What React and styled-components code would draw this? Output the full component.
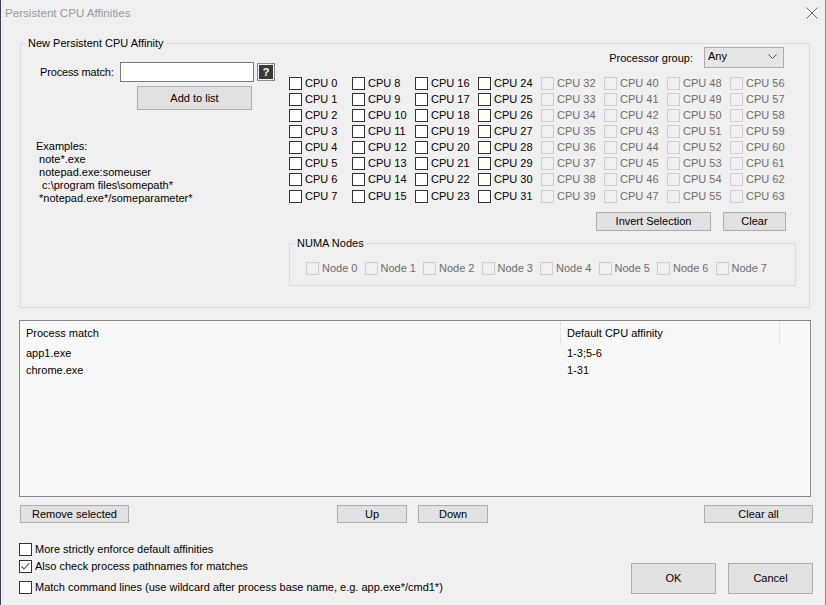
import React from "react";
import styled, { createGlobalStyle } from "styled-components";

const Global = createGlobalStyle`
  html, body {
    margin: 0;
    padding: 0;
    background: #f0f0f0;
  }
  body {
    font-family: "Liberation Sans", Arial, sans-serif;
    font-size: 11px;
    color: #000;
  }
`;

const Window = styled.div`
  width: 826px;
  height: 605px;
  box-sizing: border-box;
  border-left: 1px solid #3f3f52;
  border-right: 1px solid #8a8a8a;
  background: #f0f0f0;
  overflow: hidden;
`;

const TitleBar = styled.div`
  height: 30px;
  display: flex;
  align-items: flex-start;
  justify-content: space-between;
  padding: 5px 7px 0 4px;
  box-sizing: border-box;
`;

const Title = styled.span`
  font-size: 11.6px;
  line-height: 15px;
  color: #9a9a9a;
`;

const CloseIcon = styled.svg`
  margin-top: 2px;
`;

const Body = styled.div`
  padding: 13px 0 0 18px;
  width: 794px;
`;

const GroupBox = styled.div`
  position: relative;
  box-sizing: border-box;
  border: 1px solid #dcdcdc;
  width: ${(p) => p.$w}px;
  height: ${(p) => p.$h}px;
  margin-left: ${(p) => p.$ml || 0}px;
  margin-top: ${(p) => p.$mt || 0}px;
`;

const Legend = styled.span`
  position: absolute;
  top: -7px;
  left: 5px;
  padding: 0 2px;
  line-height: 13px;
  background: #f0f0f0;
`;

const GroupInner = styled.div`
  display: flex;
`;

const LeftCol = styled.div`
  width: 268px;
  flex: none;
`;

const RightCol = styled.div`
  flex: 1;
  display: flex;
  flex-direction: column;
`;

const ProcessRow = styled.div`
  display: flex;
  align-items: center;
  margin-top: 18px;
  padding-left: 19px;
`;

const FieldLabel = styled.span`
  width: 80px;
  line-height: 13px;
  letter-spacing: -0.15px;
`;

const TextInput = styled.div`
  width: 134px;
  height: 20px;
  box-sizing: border-box;
  border: 1px solid #7a7a7a;
  background: #ffffff;
`;

const HelpButton = styled.div`
  width: 18px;
  height: 18px;
  margin-left: 3px;
  box-sizing: border-box;
  border: 1px solid #8a8a8a;
  padding: 1px;
  display: flex;
`;

const HelpGlyph = styled.span`
  flex: 1;
  background: #3a3a3a;
  color: #fff;
  font-weight: bold;
  font-size: 11px;
  line-height: 14px;
  text-align: center;
`;

const Button = styled.div`
  box-sizing: border-box;
  width: ${(p) => p.$w}px;
  height: ${(p) => p.$h || 19}px;
  background: #e1e1e1;
  border: 1px solid #adadad;
  display: flex;
  align-items: center;
  justify-content: center;
  line-height: 13px;
`;

const AddButton = styled(Button)`
  margin: 4px 0 0 116px;
`;

const Examples = styled.div`
  margin-top: 30px;
  padding-left: 15px;
  line-height: 13px;
  white-space: pre;
`;

const GroupRow = styled.div`
  display: flex;
  align-items: center;
  justify-content: flex-end;
  margin: 3px 25px 0 0;
`;

const Select = styled.div`
  width: 80px;
  height: 21px;
  box-sizing: border-box;
  margin-left: 11px;
  border: 1px solid #acacac;
  background: #e5e5e5;
  display: flex;
  align-items: center;
  justify-content: space-between;
  padding: 0 6px 3px 3px;
  line-height: 13px;
`;

const CpuGrid = styled.div`
  display: grid;
  grid-auto-flow: column;
  grid-template-rows: repeat(8, 16.15px);
  grid-template-columns: repeat(8, 63px);
  margin-top: 7px;
`;

const Check = styled.div`
  display: flex;
  align-items: center;
  gap: 3px;
  line-height: 13px;
  color: ${(p) => (p.$disabled ? "#6d6d6d" : "#000")};
`;

const Box = styled.span`
  width: 13px;
  height: 13px;
  flex: none;
  box-sizing: border-box;
  border: 1px solid ${(p) => (p.$disabled ? "#cfcfcf" : "#333333")};
  background: ${(p) => (p.$disabled ? "#f0f0f0" : "#ffffff")};
  display: flex;
  align-items: center;
  justify-content: center;
`;

const SelectionRow = styled.div`
  display: flex;
  gap: 12px;
  margin: 8px 0 0 307px;
`;

const NumaBody = styled.div`
  display: flex;
  padding: 18px 0 0 16px;
`;

const NumaItem = styled(Check)`
  width: 58.5px;
  flex: none;
`;

const ListView = styled.div`
  margin-top: 12px;
  width: 792px;
  height: 177px;
  box-sizing: border-box;
  border: 1px solid #828790;
  background: #f8f8f8;
`;

const ListHeader = styled.div`
  display: grid;
  grid-template-columns: 541px 219px 1fr;
  height: 24px;
`;

const HeaderCell = styled.div`
  padding-left: 6px;
  display: flex;
  align-items: center;
  border-right: 1px solid ${(p) => (p.$last ? "transparent" : "#e5e5e5")};
  line-height: 13px;
`;

const ListRow = styled.div`
  display: grid;
  grid-template-columns: 541px 1fr;
  height: 17px;
  align-items: center;
  line-height: 13px;
`;

const Cell = styled.div`
  padding-left: 6px;
`;

const ActionRow = styled.div`
  display: grid;
  grid-template-columns: 318px 151px 1fr 109px;
  margin-top: 8px;
`;

const PairRow = styled.div`
  display: flex;
  gap: 11px;
`;

const RemoveButton = styled(Button)`
  margin-left: 1px;
`;

const Footer = styled.div`
  display: flex;
  justify-content: space-between;
`;

const Options = styled.div`
  margin-top: 18px;
`;

const OptionRow = styled(Check)`
  height: 17px;
  margin-top: ${(p) => (p.$spaced ? 4 : 0)}px;
`;

const DialogButtons = styled.div`
  display: flex;
  gap: 12px;
  margin-top: 40px;
`;

const CheckMark = () => (
  <svg width="11" height="11" viewBox="0 0 11 11">
    <path d="M1.5 5.5 L4 8 L9.5 2" fill="none" stroke="#444" strokeWidth="1.1" />
  </svg>
);

const CheckBox = ({ label, disabled, checked, as: As = Check, ...rest }) => (
  <As $disabled={disabled} {...rest}>
    <Box $disabled={disabled}>{checked && <CheckMark />}</Box>
    <span>{label}</span>
  </As>
);

const examples = [
  "Examples:",
  " note*.exe",
  " notepad.exe:someuser",
  "  c:\\program files\\somepath*",
  " *notepad.exe*/someparameter*",
];

const rules = [
  { match: "app1.exe", affinity: "1-3;5-6" },
  { match: "chrome.exe", affinity: "1-31" },
];

export default function App() {
  const cpus = Array.from({ length: 64 }, (_, i) => i);
  const nodes = Array.from({ length: 8 }, (_, i) => i);

  return (
    <Window>
      <Global />
      <TitleBar>
        <Title>Persistent CPU Affinities</Title>
        <CloseIcon width="12" height="12" viewBox="0 0 12 12">
          <path d="M0.5 0.5 L11.5 11.5 M11.5 0.5 L0.5 11.5" stroke="#6a6a6a" strokeWidth="1" />
        </CloseIcon>
      </TitleBar>
      <Body>
        <GroupBox $w={790} $h={265} $ml={1}>
          <Legend>New Persistent CPU Affinity</Legend>
          <GroupInner>
            <LeftCol>
              <ProcessRow>
                <FieldLabel>Process match:</FieldLabel>
                <TextInput />
                <HelpButton>
                  <HelpGlyph>?</HelpGlyph>
                </HelpButton>
              </ProcessRow>
              <AddButton $w={115} $h={24}>Add to list</AddButton>
              <Examples>{examples.join("\n")}</Examples>
            </LeftCol>
            <RightCol>
              <GroupRow>
                <span>Processor group:</span>
                <Select>
                  <span>Any</span>
                  <svg width="9" height="5" viewBox="0 0 9 5">
                    <path d="M0.5 0.5 L4.5 4.5 L8.5 0.5" fill="none" stroke="#555" strokeWidth="1" />
                  </svg>
                </Select>
              </GroupRow>
              <CpuGrid>
                {cpus.map((n) => (
                  <CheckBox key={n} label={`CPU ${n}`} disabled={n >= 32} />
                ))}
              </CpuGrid>
              <SelectionRow>
                <Button $w={115}>Invert Selection</Button>
                <Button $w={63}>Clear</Button>
              </SelectionRow>
              <GroupBox $w={507} $h={43} $mt={12}>
                <Legend>NUMA Nodes</Legend>
                <NumaBody>
                  {nodes.map((n) => (
                    <CheckBox key={n} as={NumaItem} label={`Node ${n}`} disabled />
                  ))}
                </NumaBody>
              </GroupBox>
            </RightCol>
          </GroupInner>
        </GroupBox>

        <ListView>
          <ListHeader>
            <HeaderCell>Process match</HeaderCell>
            <HeaderCell>Default CPU affinity</HeaderCell>
            <HeaderCell $last />
          </ListHeader>
          {rules.map((r) => (
            <ListRow key={r.match}>
              <Cell>{r.match}</Cell>
              <Cell>{r.affinity}</Cell>
            </ListRow>
          ))}
        </ListView>

        <ActionRow>
          <div>
            <RemoveButton $w={109} $h={18}>Remove selected</RemoveButton>
          </div>
          <PairRow>
            <Button $w={70} $h={18}>Up</Button>
            <Button $w={70} $h={18}>Down</Button>
          </PairRow>
          <div />
          <Button $w={109} $h={18}>Clear all</Button>
        </ActionRow>

        <Footer>
          <Options>
            <CheckBox as={OptionRow} label="More strictly enforce default affinities" />
            <CheckBox as={OptionRow} label="Also check process pathnames for matches" checked />
            <CheckBox
              as={OptionRow}
              $spaced
              label="Match command lines (use wildcard after process base name, e.g. app.exe*/cmd1*)"
            />
          </Options>
          <DialogButtons>
            <Button $w={85} $h={31}>OK</Button>
            <Button $w={85} $h={31}>Cancel</Button>
          </DialogButtons>
        </Footer>
      </Body>
    </Window>
  );
}
